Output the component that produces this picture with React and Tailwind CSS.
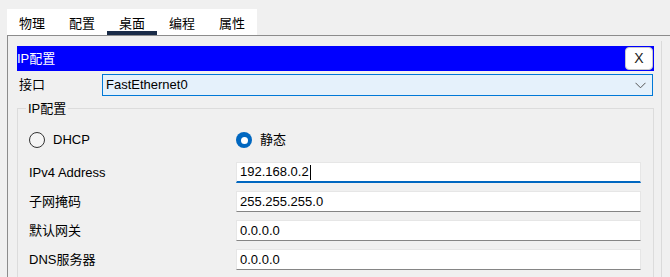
import React from "react";

const TABS = ["物理", "配置", "桌面", "编程", "属性"];

const FIELDS = [
  { label: "IPv4 Address", value: "192.168.0.2", focused: true },
  { label: "子网掩码", value: "255.255.255.0" },
  { label: "默认网关", value: "0.0.0.0" },
  { label: "DNS服务器", value: "0.0.0.0" },
];

const font = {
  fontFamily: '"Liberation Sans", "Noto Sans CJK SC", sans-serif',
};

function Radio({ checked, label }) {
  return (
    <div className="flex items-center gap-[8px]">
      {checked ? (
        <span className="w-[16px] h-[16px] rounded-full bg-[#0067c0] flex items-center justify-center">
          <span className="w-[7px] h-[7px] rounded-full bg-white" />
        </span>
      ) : (
        <span className="w-[16px] h-[16px] rounded-full border border-[#333] bg-[#f5f5f5]" />
      )}
      <span className="text-[13px] text-black">{label}</span>
    </div>
  );
}

function Field({ label, value, focused }) {
  return (
    <div className="flex items-center h-[21px]">
      <div className="w-[207px] text-[13px] text-black">{label}</div>
      <div
        className={[
          "w-[405px] h-[21px] bg-white border border-[#e6e6e6] flex items-center pl-[3px] text-[13px] text-black",
          focused ? "border-b-2 border-b-[#0067c0]" : "border-b border-b-[#858585]",
        ].join(" ")}
      >
        {value}
        {focused && <span className="inline-block w-px h-[15px] bg-black ml-px" />}
      </div>
    </div>
  );
}

export default function App() {
  return (
    <div className="w-[670px] h-[277px] bg-[#f0f0f0] overflow-hidden" style={font}>
      {/* tab strip */}
      <div className="pt-[9px] pl-[7px]">
        <div className="w-[250px] h-[26px] bg-white flex">
          {TABS.map((t, i) => (
            <div key={t} className="w-[50px] relative flex justify-center pt-[5px] text-[13px] text-black">
              {t}
              {i === 2 && <span className="absolute left-0 right-0 bottom-0 h-[4px] bg-[#192b47]" />}
            </div>
          ))}
        </div>
      </div>

      {/* panel */}
      <div className="ml-[7px] border-t border-l border-[#8c8c8c] h-[300px] flex">
        <div className="w-[646px] pl-[9px] pt-[10px]">
          {/* header bar */}
          <div className="h-[25px] w-[637px] bg-[#0000ff] flex items-center justify-between">
            <span className="text-[13px] text-white">IP配置</span>
            <span className="w-[28px] h-[23px] mr-[1px] bg-white rounded-[4px] border border-[#c8c8c8] flex items-center justify-center text-[14px] text-[#222]">
              X
            </span>
          </div>

          {/* interface row */}
          <div className="flex items-center mt-[3px]">
            <span className="w-[85px] pl-[2px] text-[13px] text-black">接口</span>
            <div className="w-[551px] h-[22px] bg-[#e5f1fb] border border-[#0078d7] flex items-center justify-between pl-[3px] pr-[6px] text-[13px] text-black">
              FastEthernet0
              <svg width="11" height="7" viewBox="0 0 11 7">
                <path d="M0.5 0.8 L5.5 5.8 L10.5 0.8" fill="none" stroke="#555" strokeWidth="1" />
              </svg>
            </div>
          </div>

          {/* group box */}
          <div className="relative mt-[12px] w-[637px] h-[200px] border border-[#dcdcdc] pl-[11px] pt-[22px]">
            <span className="absolute left-[8px] top-[-8px] px-[2px] bg-[#f0f0f0] text-[13px] leading-[15px] text-black">
              IP配置
            </span>
            <div className="flex items-center h-[18px]">
              <div className="w-[207px]">
                <Radio label="DHCP" />
              </div>
              <Radio checked label="静态" />
            </div>
            <div className="flex flex-col gap-[8px] mt-[13px]">
              {FIELDS.map((f) => (
                <Field key={f.label} {...f} />
              ))}
            </div>
          </div>
        </div>
        <div className="ml-[7px] mt-[5px] w-px bg-[#dadada]" />
      </div>
    </div>
  );
}
